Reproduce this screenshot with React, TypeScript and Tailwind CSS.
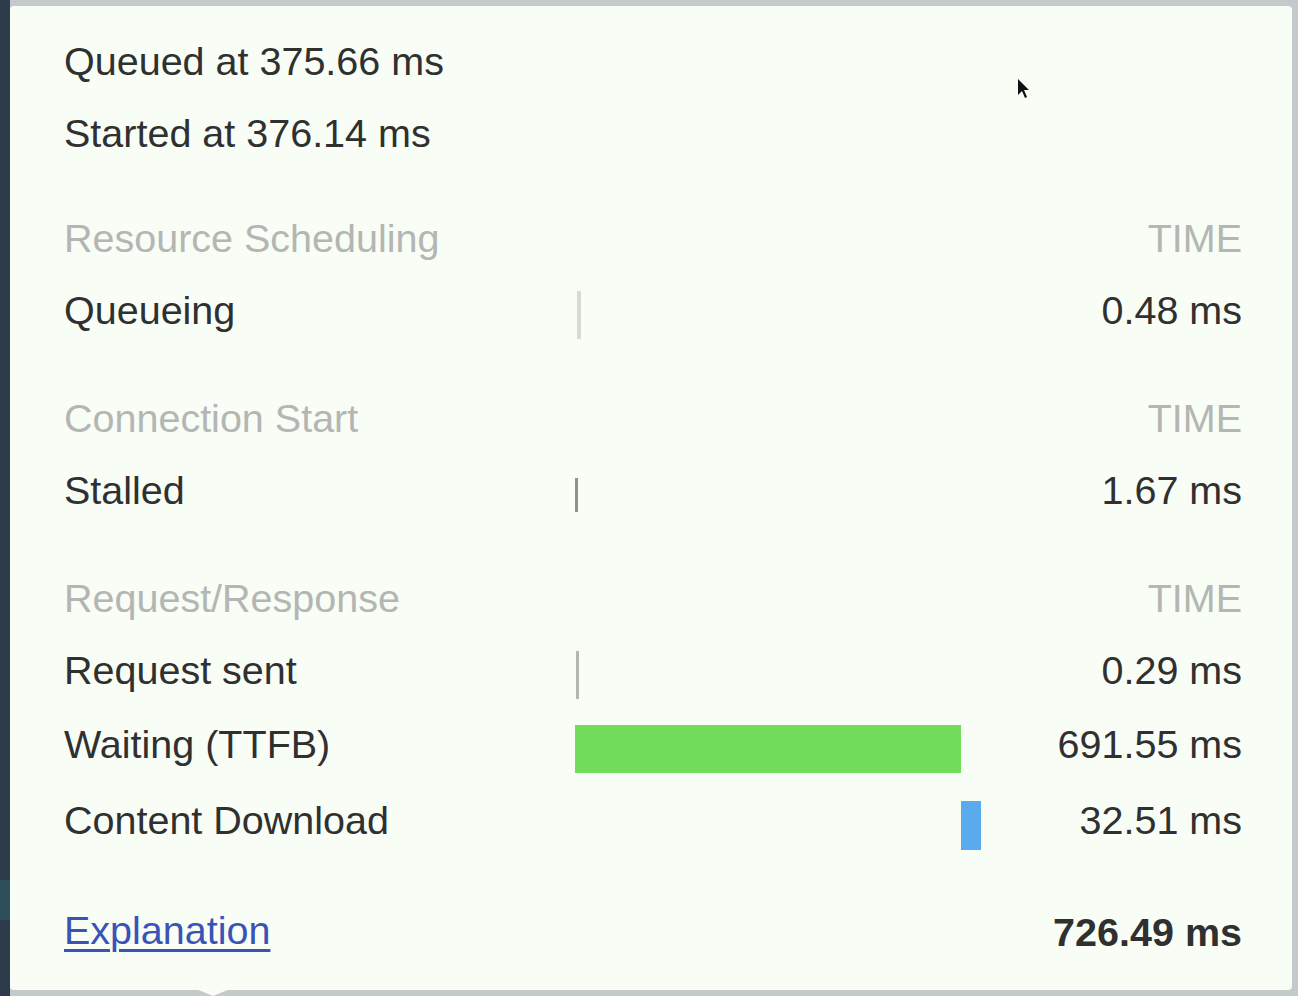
import React from "react"

type Row = {
  label: string
  value: string
  bar?: { left: number; width: number; h: number; color: string }
}

type Section = { title: string; rows: Row[] }

const sections: Section[] = [
  {
    title: "Resource Scheduling",
    rows: [{ label: "Queueing", value: "0.48 ms", bar: { left: 2, width: 4, h: 48, color: "#d6d9d6" } }],
  },
  {
    title: "Connection Start",
    rows: [{ label: "Stalled", value: "1.67 ms", bar: { left: 0, width: 3, h: 34, color: "#8e918e" } }],
  },
  {
    title: "Request/Response",
    rows: [
      { label: "Request sent", value: "0.29 ms", bar: { left: 1, width: 3, h: 48, color: "#b3b6b3" } },
      { label: "Waiting (TTFB)", value: "691.55 ms", bar: { left: 0, width: 386, h: 48, color: "#72dd5c" } },
      { label: "Content Download", value: "32.51 ms", bar: { left: 386, width: 20, h: 49, color: "#5aabeb" } },
    ],
  },
]

function TimingRow({ row, tall }: { row: Row; tall?: boolean }) {
  return (
    <div className={`grid grid-cols-[511px_1fr_auto] items-center ${tall ? "h-[76px]" : "h-[72px]"}`}>
      <span className="pb-[8px] text-[#2f302f]">{row.label}</span>
      <div className="flex items-center">
        {row.bar && (
          <div
            style={{
              marginLeft: row.bar.left,
              width: row.bar.width,
              height: row.bar.h,
              background: row.bar.color,
            }}
          />
        )}
      </div>
      <span className="pb-[8px] text-right text-[#2f302f]">{row.value}</span>
    </div>
  )
}

export default function App() {
  return (
    <div
      className="relative flex w-[1298px] h-[996px] bg-[#c4c9cb] overflow-hidden"
      style={{ fontFamily: '"Liberation Sans", Arial, sans-serif' }}
    >
      <div className="w-[10px] h-full bg-[#2c3c4a] flex flex-col">
        <div className="h-[880px]" />
        <div className="h-[40px] bg-[#2e4e5a]" />
      </div>
      <div className="flex-1 pt-[6px] pb-[6px] pr-[6px]">
        <div className="relative h-full rounded-[4px] bg-[#f8fdf6] pl-[54px] pr-[50px] pt-[24px] text-[39.5px] leading-none">
          <div className="h-[72px] flex items-center">
            <span className="pb-[8px] text-[#2f302f]">Queued at 375.66 ms</span>
          </div>
          <div className="h-[72px] flex items-center">
            <span className="pb-[8px] text-[#2f302f]">Started at 376.14 ms</span>
          </div>

          {sections.map((s, i) => (
            <div key={s.title} className={i === 0 ? "mt-[33px]" : "mt-[36px]"}>
              <div className="h-[72px] pb-[8px] flex items-center justify-between text-[#b3b6b3]">
                <span>{s.title}</span>
                <span>TIME</span>
              </div>
              {s.rows.map((r, j) => (
                <TimingRow key={r.label} row={r} tall={j > 0} />
              ))}
            </div>
          ))}

          <div className="mt-[36px] h-[72px] flex items-center justify-between">
            <a href="#" className="pb-[8px] text-[#3a53b7] underline decoration-[3px] underline-offset-[5px]">
              Explanation
            </a>
            <span className="pb-[4px] font-bold text-[#2f302f]">726.49 ms</span>
          </div>

          {/* mouse cursor */}
          <svg className="absolute left-[1007px] top-[72px]" width="16" height="24" viewBox="0 0 16 24">
            <path d="M1 1 L1 17 L5 13 L8 20 L10 19 L7 12 L12 12 Z" fill="#111" />
          </svg>
        </div>
      </div>
      {/* popover arrow */}
      <div className="absolute left-[196px] bottom-0 w-0 h-0 border-l-[17px] border-r-[17px] border-t-[7px] border-l-transparent border-r-transparent border-t-[#f8fdf6]" />
    </div>
  )
}
